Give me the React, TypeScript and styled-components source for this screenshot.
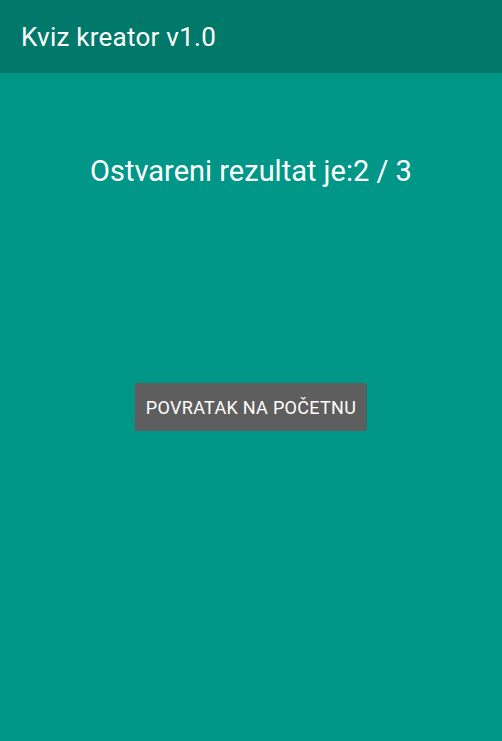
import React from 'react';
import styled, { createGlobalStyle } from 'styled-components';

const GlobalStyle = createGlobalStyle`
  html, body {
    margin: 0;
    padding: 0;
    height: 100%;
    background-color: #009688;
  }

  #root {
    height: 100%;
  }
`;

export default function App(): React.ReactElement {
  return (
    <>
      <GlobalStyle />
      <Screen>
        <AppBar>
          <AppTitle>Kviz kreator v1.0</AppTitle>
        </AppBar>
        <Content>
          <Score>Ostvareni rezultat je:2 / 3</Score>
          <BackButton type="button">Povratak na početnu</BackButton>
        </Content>
      </Screen>
    </>
  );
}

const Screen = styled.div`
  display: flex;
  flex-direction: column;
  min-height: 741px;
  background-color: #009688;
  font-family: Roboto, 'Noto Sans', sans-serif;
`;

const AppBar = styled.header`
  height: 73px;
  display: flex;
  align-items: center;
  padding: 0 21px;
  background-color: #00796b;
`;

const AppTitle = styled.h1`
  margin: 0;
  font-size: 26px;
  font-weight: 400;
  letter-spacing: 0.25px;
  color: #ffffff;
`;

const Content = styled.main`
  display: flex;
  flex-direction: column;
  align-items: center;
  padding-top: 81px;
`;

const Score = styled.p`
  margin: 0;
  font-size: 29px;
  line-height: 34px;
  color: #ffffff;
`;

const BackButton = styled.button`
  margin-top: 195px;
  height: 48px;
  padding: 0 11px;
  border: none;
  border-radius: 2px;
  background-color: #5e5e5e;
  color: #ffffff;
  font-family: Roboto, 'Noto Sans', sans-serif;
  font-size: 18px;
  letter-spacing: 0.3px;
  text-transform: uppercase;
  cursor: pointer;
`;
